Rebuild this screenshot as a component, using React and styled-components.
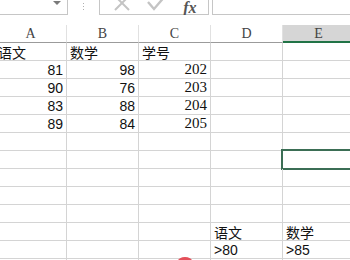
import React from "react";
import styled, { createGlobalStyle } from "styled-components";

const GlobalStyle = createGlobalStyle`
  html, body {
    margin: 0;
    padding: 0;
    background: #ffffff;
    overflow: hidden;
  }
  body {
    font-family: "Liberation Sans", "Noto Sans CJK SC", sans-serif;
  }
`;

const Sheet = styled.div`
  position: relative;
  width: 350px;
  height: 260px;
  overflow: hidden;
  background: #fff;
`;

const FormulaBar = styled.div`
  display: flex;
  align-items: flex-end;
  height: 15px;
  overflow: hidden;
  margin-bottom: 10px;
`;

const NameBox = styled.div`
  position: relative;
  width: 68px;
  height: 30px;
  box-sizing: border-box;
  border: 1px solid #c6c6c6;
  border-left: none;
  flex-shrink: 0;
`;

const Arrow = styled.span`
  position: absolute;
  right: 6px;
  bottom: 9px;
  width: 0;
  height: 0;
  border-left: 4px solid transparent;
  border-right: 4px solid transparent;
  border-top: 4px solid #7a7a7a;
`;

const Dots = styled.div`
  width: 31px;
  display: flex;
  justify-content: center;
  align-self: stretch;
  flex-direction: column;
  align-items: center;
  gap: 2px;
  padding-bottom: 2px;
  span {
    width: 1px;
    height: 1px;
    background: #b0b0b0;
  }
`;

const ButtonBox = styled.div`
  display: flex;
  align-items: flex-end;
  justify-content: space-around;
  width: 110px;
  height: 30px;
  box-sizing: border-box;
  border: 1px solid #c6c6c6;
  flex-shrink: 0;
  padding: 0 4px 2px 6px;
`;

const Fx = styled.span`
  font-family: "Liberation Serif", serif;
  font-style: italic;
  font-weight: bold;
  font-size: 16px;
  line-height: 14px;
  color: #555;
  margin-bottom: -3px;
`;

const FormulaInput = styled.div`
  flex: 1;
  height: 30px;
  margin-left: 3px;
  box-sizing: border-box;
  border: 1px solid #c6c6c6;
  border-right: none;
`;

const Grid = styled.div`
  display: grid;
  grid-template-columns: repeat(5, 72px);
  grid-auto-rows: 18px;
  margin-left: -5px;
`;

const HeadCell = styled.div`
  box-sizing: border-box;
  display: flex;
  align-items: center;
  justify-content: center;
  padding-top: 1px;
  font-family: "Liberation Serif", serif;
  font-size: 14px;
  color: #444;
  border-right: 1px solid ${({ $active }) => ($active ? "#d2d2d2" : "#e1e1e1")};
  border-bottom: ${({ $active }) => ($active ? "2px solid #217346" : "1px solid #9b9b9b")};
  background: ${({ $active }) => ($active ? "#d6d6d6" : "#ffffff")};
`;

const Cell = styled.div`
  position: relative;
  box-sizing: border-box;
  display: flex;
  align-items: center;
  justify-content: ${({ $num }) => ($num ? "flex-end" : "flex-start")};
  padding: ${({ $num }) => ($num ? "0 3px 0 0" : "0 0 0 3px")};
  border-right: 1px solid #d4d4d4;
  border-bottom: 1px solid #d4d4d4;
  font-family: ${({ $serif }) =>
    $serif
      ? `"Liberation Serif", "Noto Sans CJK SC", serif`
      : `"Liberation Sans", "Noto Sans CJK SC", sans-serif`};
  font-size: ${({ $serif }) => ($serif ? "15px" : "14px")};
  color: #111;
  white-space: nowrap;
`;

const Selection = styled.div`
  position: absolute;
  left: -2px;
  top: -2px;
  right: -2px;
  bottom: -2px;
  border: 2px solid #3b6e55;
  pointer-events: none;
`;

const Mark = styled.div`
  position: absolute;
  left: 178px;
  top: 257px;
  width: 14px;
  height: 8px;
  border-radius: 50%;
  background: #e4505a;
`;

const columns = ["A", "B", "C", "D", "E"];

const rows = [
  [{ t: "语文" }, { t: "数学" }, { t: "学号" }, {}, {}],
  [{ t: "81", n: 1 }, { t: "98", n: 1 }, { t: "202", n: 1, s: 1 }, {}, {}],
  [{ t: "90", n: 1 }, { t: "76", n: 1 }, { t: "203", n: 1, s: 1 }, {}, {}],
  [{ t: "83", n: 1 }, { t: "88", n: 1 }, { t: "204", n: 1, s: 1 }, {}, {}],
  [{ t: "89", n: 1 }, { t: "84", n: 1 }, { t: "205", n: 1, s: 1 }, {}, {}],
  [{}, {}, {}, {}, {}],
  [{}, {}, {}, {}, { sel: 1 }],
  [{}, {}, {}, {}, {}],
  [{}, {}, {}, {}, {}],
  [{}, {}, {}, {}, {}],
  [{}, {}, {}, { t: "语文" }, { t: "数学" }],
  [{}, {}, {}, { t: ">80" }, { t: ">85" }],
  [{}, {}, {}, {}, {}],
];

const CrossIcon = () => (
  <svg width="18" height="18" viewBox="0 0 18 18">
    <path d="M2 2 L16 16 M16 2 L2 16" stroke="#c4c4c4" strokeWidth="2" fill="none" />
  </svg>
);

const CheckIcon = () => (
  <svg width="22" height="18" viewBox="0 0 22 18">
    <path d="M2 8 L8 15 L20 1" stroke="#c4c4c4" strokeWidth="2.4" fill="none" />
  </svg>
);

export default function App() {
  return (
    <>
      <GlobalStyle />
      <Sheet>
        <FormulaBar>
          <NameBox>
            <Arrow />
          </NameBox>
          <Dots>
            <span />
            <span />
            <span />
          </Dots>
          <ButtonBox>
            <CrossIcon />
            <CheckIcon />
            <Fx>fx</Fx>
          </ButtonBox>
          <FormulaInput />
        </FormulaBar>
        <Grid>
          {columns.map((c) => (
            <HeadCell key={c} $active={c === "E"}>
              {c}
            </HeadCell>
          ))}
          {rows.map((row, ri) =>
            row.map((cell, ci) => (
              <Cell key={`${ri}-${ci}`} $num={cell.n} $serif={cell.s}>
                {cell.t}
                {cell.sel && <Selection />}
              </Cell>
            ))
          )}
        </Grid>
        <Mark />
      </Sheet>
    </>
  );
}
